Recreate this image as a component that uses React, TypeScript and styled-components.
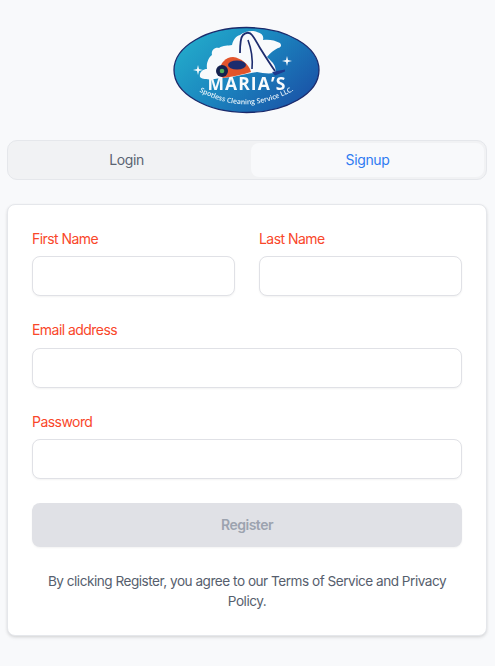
import React from "react";
import styled, { createGlobalStyle } from "styled-components";

const GlobalStyle = createGlobalStyle`
  * {
    box-sizing: border-box;
  }
  html, body {
    margin: 0;
    padding: 0;
    background: #f8f9fb;
    font-family: Inter, "Liberation Sans", sans-serif;
  }
`;

const Logo = () => (
    <LogoSvg viewBox="0 0 148 88" aria-label="Maria's Spotless Cleaning Service LLC.">
        <defs>
            <linearGradient id="logoFill" x1="0" y1="0.1" x2="1" y2="0.7">
                <stop offset="0" stopColor="#24b0cc" />
                <stop offset="0.5" stopColor="#1b86bf" />
                <stop offset="1" stopColor="#1a55a8" />
            </linearGradient>
            <path id="logoCurve" d="M19 61 Q 73 96 128 60" fill="none" />
        </defs>
        <ellipse cx="73.5" cy="44" rx="72.5" ry="42.5" fill="url(#logoFill)" stroke="#1b2a6b" strokeWidth="1.3" />
        {/* foam */}
        <path
            d="M27 51 C26 46 30 43 34 43 C33 37 36 31 39 29 C38 25 41 21 46 22 C50 19 55 20 59 19 C60 14 63 10 67 9 C72 5 80 4 84 6 C89 7 91 10 90 14 C95 13 102 14 107 17 C109 19 108 22 105 22 C101 24 97 27 94 31 C97 34 101 37 102 41 C103 44 103 46 101 47 C95 48 89 47 84 46 C72 48 58 52 47 52 C40 54 29 54 27 51 Z"
            fill="#f8fafc"
        />
        {/* hose */}
        <path
            d="M67 27 C67 20 67 12 70 9 C73 6 77 6 79 9 C83 14 85 19 87 22 C92 30 97 38 102 45"
            fill="none"
            stroke="#1d2c6e"
            strokeWidth="1.8"
        />
        <path d="M75 14 C78 22 80 32 79 43" fill="none" stroke="#1d2c6e" strokeWidth="1.6" />
        <path d="M99 46 L112 43.5 L112 45.5 L102 49.5 Z" fill="#1d3a8f" />
        {/* vacuum body */}
        <path d="M47 44 C47 37 53 31 60 31 C68 32 76 38 78 46 C72 48 58 51 49 52 Z" fill="#e2542b" />
        <ellipse cx="64" cy="39" rx="9" ry="4.6" fill="#1d2c6e" />
        <circle cx="49" cy="45" r="6" fill="#14224f" />
        <circle cx="49" cy="45" r="2.3" fill="#4fae5a" />
        {/* sparkles */}
        <path d="M25 39 L26 43 L30 44 L26 45 L25 49 L24 45 L20 44 L24 43 Z" fill="#f8fafc" />
        <path d="M114 30 L115 34 L119 35 L115 36 L114 40 L113 36 L109 35 L113 34 Z" fill="#f8fafc" />
        <LogoTitle x="74" y="64" textAnchor="middle">MARIA’S</LogoTitle>
        <LogoTagline>
            <textPath href="#logoCurve" startOffset="50%" textAnchor="middle">
                Spotless Cleaning Service LLC.
            </textPath>
        </LogoTagline>
    </LogoSvg>
);

const Field = ({ label, type = "text" }: { label: string; type?: string }) => (
    <FieldBox>
        <Label>{label}</Label>
        <Input type={type} />
    </FieldBox>
);

export default function App() {
    return (
        <Page>
            <GlobalStyle />
            <LogoRow>
                <Logo />
            </LogoRow>
            <Tabs>
                <Tab>Login</Tab>
                <Tab $active>Signup</Tab>
            </Tabs>
            <Card>
                <Form>
                    <NameRow>
                        <Field label="First Name" />
                        <Field label="Last Name" />
                    </NameRow>
                    <Field label="Email address" type="email" />
                    <Field label="Password" type="password" />
                    <Submit type="button" disabled>Register</Submit>
                </Form>
                <Terms>By clicking Register, you agree to our Terms of Service and Privacy Policy.</Terms>
            </Card>
        </Page>
    );
}

const Page = styled.div`
  width: 495px;
  min-height: 666px;
  padding: 26px 8px 0 7px;
  background: #f8f9fb;
`;

const LogoRow = styled.div`
  display: flex;
  justify-content: center;
  margin-bottom: 26px;
`;

const LogoSvg = styled.svg`
  display: block;
  width: 148px;
  height: 88px;
  filter: blur(0.35px);
`;

const LogoTitle = styled.text`
  font-family: "Open Sans", sans-serif;
  font-size: 17.5px;
  font-weight: 700;
  letter-spacing: 1.1px;
  fill: #f8fafc;
`;

const LogoTagline = styled.text`
  font-family: "Open Sans", sans-serif;
  font-size: 6.9px;
  font-weight: 600;
  fill: #e6f2fa;
`;

const Tabs = styled.div`
  display: grid;
  grid-template-columns: 233px 233px;
  gap: 8px;
  height: 40px;
  width: 480px;
  margin-bottom: 24px;
  padding: 2px;
  border: 1px solid #e5e7eb;
  border-radius: 10px;
  background: #f1f2f4;
`;

const Tab = styled.div<{ $active?: boolean }>`
  display: flex;
  align-items: center;
  justify-content: center;
  padding-bottom: 1px;
  border-radius: 8px;
  font-size: 14px;
  letter-spacing: -0.38px;
  color: ${(props) => (props.$active ? "#2f7bf2" : "#5b6472")};
  background: ${(props) => (props.$active ? "#f8f9fb" : "transparent")};
`;

const Card = styled.div`
  width: 480px;
  height: 432px;
  padding: 24px;
  border: 1px solid #e5e7eb;
  border-radius: 8px;
  background: #fff;
  box-shadow: 0 2px 4px -1px rgba(0, 0, 0, 0.1), 0 1px 3px rgba(0, 0, 0, 0.08);
`;

const Form = styled.form`
  display: flex;
  flex-direction: column;
  gap: 24px;
`;

const NameRow = styled.div`
  display: grid;
  grid-template-columns: 1fr 1fr;
  gap: 24px;
`;

const FieldBox = styled.div`
  display: flex;
  flex-direction: column;
  gap: 7.4px;
`;

const Label = styled.label`
  font-size: 14px;
  line-height: 20px;
  letter-spacing: -0.55px;
  color: #f9472a;
`;

const Input = styled.input`
  display: block;
  width: 100%;
  height: 40px;
  border: 1px solid #e0e1e6;
  border-radius: 8px;
  background: #fff;
  box-shadow: 0 1px 2px rgba(0, 0, 0, 0.05);
`;

const Submit = styled.button`
  height: 44px;
  padding: 0 0 1px;
  border: none;
  border-radius: 8px;
  background: #e0e1e6;
  color: #9ca3af;
  font-family: inherit;
  font-size: 14px;
  font-weight: 600;
  letter-spacing: -0.5px;
  box-shadow: 0 1px 2px rgba(0, 0, 0, 0.05);
`;

const Terms = styled.p`
  margin: 24px 0 0;
  text-align: center;
  font-size: 13.6px;
  line-height: 20px;
  letter-spacing: -0.49px;
  color: #565e6d;
`;
